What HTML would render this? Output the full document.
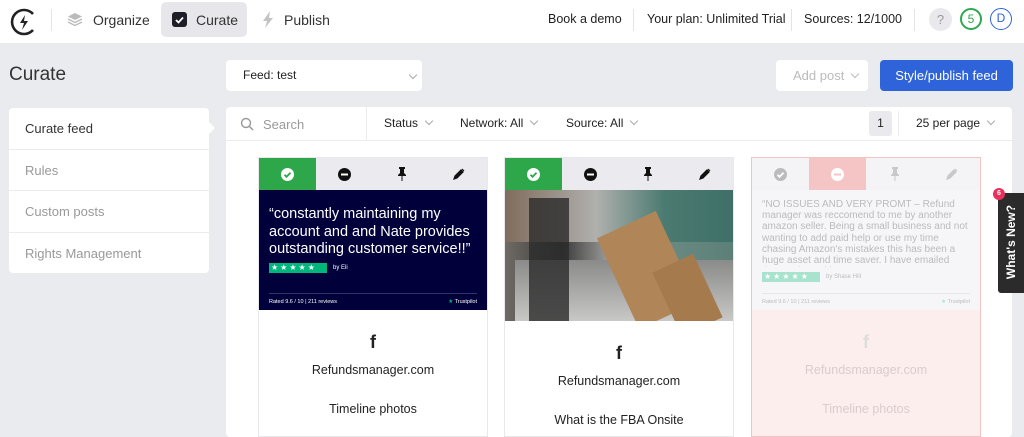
<!DOCTYPE html>
<html><head><meta charset="utf-8"><style>
*{box-sizing:border-box;margin:0;padding:0}
body{width:1024px;height:426px;overflow:hidden;background:#eaebef;font-family:"Liberation Sans",sans-serif;color:#222;position:relative;font-size:13px}
.abs{position:absolute}
.hdr{left:0;top:0;width:1024px;height:43px;background:#fff}
.sep{width:1px;background:#e4e4e8}
.chev{display:inline-block;width:6px;height:6px;border-right:1px solid #aaa;border-bottom:1px solid #aaa;transform:rotate(45deg);margin-left:8px;position:relative;top:-3px}
.side{left:9px;top:108px;width:200px;height:165px;background:#fff;border-radius:4px}
.side div{height:41.5px;border-bottom:1px solid #ececef;padding-left:16px;line-height:41px;color:#999;font-size:13px}
.card{background:#fff;border:1px solid #e8e8ec;width:230px;height:280px;top:157px}
.bar{height:32px;background:#ebebef;display:flex}
.bar span{flex:1;display:flex;align-items:center;justify-content:center}
.ctr{text-align:center;position:absolute;width:100%;font-size:13px}
</style></head><body>
<div class="abs hdr"></div>
<svg class="abs" style="left:9px;top:7px" width="30" height="30" viewBox="0 0 30 30"><path d="M24 7A12 12 0 1 0 24 23" fill="none" stroke="#222" stroke-width="2.6"/><path d="M16 8l-5 8h4l-2 7 6-9h-4z" fill="#222"/></svg>
<div class="abs sep" style="left:51px;top:9px;height:22px"></div>
<svg class="abs" style="left:67px;top:12px" width="16" height="14"><path d="M8 1l7 3.5-7 3.5-7-3.5z" fill="#bbb"/><path d="M1 7l7 3.5 7-3.5M1 10l7 3.5 7-3.5" fill="none" stroke="#bbb" stroke-width="1.4"/></svg>
<div class="abs" style="left:93px;top:12px;font-size:14px;color:#333">Organize</div>
<div class="abs" style="left:161px;top:2px;width:86px;height:35px;background:#e7e7eb;border-radius:5px"></div>
<div class="abs" style="left:172px;top:12px;width:15px;height:15px;background:#1e1e28;border-radius:3px"></div>
<svg class="abs" style="left:172px;top:12px" width="15" height="15"><path d="M4 8l2.5 2.5L11 5.5" fill="none" stroke="#fff" stroke-width="1.8"/></svg>
<div class="abs" style="left:196px;top:12px;font-size:14px;color:#333">Curate</div>
<svg class="abs" style="left:262px;top:11px" width="12" height="17"><path d="M8 0L1 10h4l-2 7 8-10H7z" fill="#c4c4c8"/></svg>
<div class="abs" style="left:284px;top:12px;font-size:14px;color:#333">Publish</div>
<div class="abs" style="left:548px;top:12px;font-size:12.5px">Book a demo</div>
<div class="abs sep" style="left:633px;top:9px;height:22px"></div>
<div class="abs" style="left:647px;top:12px;font-size:12.5px">Your plan: Unlimited Trial</div>
<div class="abs sep" style="left:791px;top:9px;height:22px"></div>
<div class="abs" style="left:804px;top:12px;font-size:12.5px">Sources: 12/1000</div>
<div class="abs sep" style="left:914px;top:9px;height:22px"></div>
<div class="abs" style="left:929px;top:8px;width:23px;height:23px;border-radius:50%;background:#e9e9ed;color:#999;text-align:center;line-height:23px;font-size:13px">?</div>
<div class="abs" style="left:960px;top:8px;width:22px;height:22px;border-radius:50%;border:2px solid #2fa84f;color:#2fa84f;text-align:center;line-height:18px;font-size:12px">5</div>
<div class="abs" style="left:990px;top:8px;width:22px;height:22px;border-radius:50%;border:1.5px solid #2d62d8;color:#2d62d8;text-align:center;line-height:19px;font-size:12px">D</div>

<div class="abs" style="left:9px;top:64px;font-size:19px;color:#333">Curate</div>
<div class="abs" style="left:226px;top:60px;width:196px;height:31px;background:#fff;border-radius:4px;padding-left:17px;line-height:31px;font-size:12px">Feed: test<span class="chev" style="position:absolute;left:176px;top:12px"></span></div>
<div class="abs" style="left:776px;top:60px;width:92px;height:31px;background:#fff;border-radius:4px;padding-left:17px;line-height:31px;font-size:13px;color:#bbb">Add post<span class="chev" style="border-color:#bbb"></span></div>
<div class="abs" style="left:880px;top:60px;width:133px;height:31px;background:#2e63d9;border-radius:4px;text-align:center;line-height:31px;font-size:13px;color:#fff">Style/publish feed</div>

<div class="abs side"><div style="color:#333">Curate feed</div><div>Rules</div><div>Custom posts</div><div style="border:none">Rights Management</div></div>
<div class="abs" style="left:208px;top:121px;width:0;height:0;border-top:7px solid transparent;border-bottom:7px solid transparent;border-left:7px solid #fff"></div>

<div class="abs" style="left:226px;top:107px;width:786px;height:330px;background:#fff;border-radius:4px"></div>
<div class="abs" style="left:226px;top:140px;width:786px;height:1px;background:#ececef"></div>
<svg class="abs" style="left:240px;top:117px" width="14" height="14"><circle cx="6" cy="6" r="4.5" fill="none" stroke="#999" stroke-width="1.4"/><path d="M9.5 9.5l3.5 3.5" stroke="#999" stroke-width="1.5"/></svg>
<div class="abs" style="left:263px;top:117px;color:#999">Search</div>
<div class="abs sep" style="left:366px;top:107px;height:33px;background:#ececef"></div>
<div class="abs" style="left:384px;top:116px;font-size:12px">Status<span class="chev"></span></div>
<div class="abs" style="left:460px;top:116px;font-size:12px">Network: All<span class="chev"></span></div>
<div class="abs" style="left:566px;top:116px;font-size:12px">Source: All<span class="chev"></span></div>
<div class="abs" style="left:869px;top:111px;width:23px;height:25px;background:#eaeaee;border-radius:3px;text-align:center;line-height:25px;font-size:12px">1</div>
<div class="abs sep" style="left:898px;top:111px;height:25px;background:#ececef"></div>
<div class="abs" style="left:916px;top:116px;font-size:12px">25 per page<span class="chev"></span></div>

<!-- card1 -->
<div class="abs card" style="left:258px">
<div class="bar"><span style="background:#2ea64a"><svg width="13" height="13"><circle cx="6.5" cy="6.5" r="6.5" fill="#fff"/><path d="M3.5 6.8l2 2 4-4" fill="none" stroke="#2ea64a" stroke-width="1.8"/></svg></span><span><svg width="13" height="13"><circle cx="6.5" cy="6.5" r="6.5" fill="#111"/><rect x="3" y="5.5" width="7" height="2" fill="#fff"/></svg></span><span><svg width="10" height="14"><path d="M2 0h6v2H7v4l2 2v1H1V8l2-2V2H2zM4.5 9h1v5h-1z" fill="#111"/></svg></span><span><svg width="12" height="12"><path d="M1 11l1-3 6-6 2 2-6 6zM9 1l2 2" fill="#111" stroke="#111" stroke-width="1.2"/></svg></span></div>
<div style="background:#01003a;height:120px;padding:16px 10px 0 10px;color:#fff;position:relative">
<div style="font-size:14.5px;line-height:17.5px">“constantly maintaining my account and and Nate provides outstanding customer service!!”</div>
<div style="margin-top:4px;display:flex;align-items:center">
<div style="width:58px;height:10px;background:#00b67a;color:#fff;font-size:8px;line-height:10px;letter-spacing:2px;padding-left:2px">★★★★★</div><span style="font-size:6px;margin-left:6px">by Eli</span></div>
<div style="position:absolute;left:10px;right:10px;top:103px;border-top:1px solid #333366;font-size:5.5px;padding-top:5px">Rated 9.6 / 10 | 211 reviews<span style="float:right"><span style="color:#00b67a">★</span> Trustpilot</span></div>
</div>
<div class="ctr" style="top:174px;font-size:18px;font-weight:bold">f</div>
<div class="ctr" style="top:205px;font-size:12.5px">Refundsmanager.com</div>
<div class="ctr" style="top:244px;font-size:12.5px">Timeline photos</div>
</div>

<!-- card2 -->
<div class="abs card" style="left:504px">
<div class="bar"><span style="background:#2ea64a"><svg width="13" height="13"><circle cx="6.5" cy="6.5" r="6.5" fill="#fff"/><path d="M3.5 6.8l2 2 4-4" fill="none" stroke="#2ea64a" stroke-width="1.8"/></svg></span><span><svg width="13" height="13"><circle cx="6.5" cy="6.5" r="6.5" fill="#111"/><rect x="3" y="5.5" width="7" height="2" fill="#fff"/></svg></span><span><svg width="10" height="14"><path d="M2 0h6v2H7v4l2 2v1H1V8l2-2V2H2zM4.5 9h1v5h-1z" fill="#111"/></svg></span><span><svg width="12" height="12"><path d="M1 11l1-3 6-6 2 2-6 6zM9 1l2 2" fill="#111" stroke="#111" stroke-width="1.2"/></svg></span></div>
<div style="height:131px;background:linear-gradient(90deg,#6f6a64 0%,#3a3a3a 25%,#9a9a98 45%,#6a8a84 70%,#5b8077 100%);position:relative;overflow:hidden">
<div style="position:absolute;left:0;top:0;width:100%;height:40%;background:linear-gradient(90deg,#806c5c,#b0b0ae 40%,#4a7a70 70%,#3f7068)"></div>
<div style="position:absolute;left:10px;top:70px;width:220px;height:61px;background:linear-gradient(#8a8a8a,#c8c8c6)"></div>
<div style="position:absolute;left:24px;top:8px;width:40px;height:123px;background:#2a2a2a;opacity:.8"></div>
<div style="position:absolute;left:110px;top:30px;width:65px;height:100px;background:#b08658;transform:rotate(-25deg)"></div>
<div style="position:absolute;left:160px;top:70px;width:45px;height:70px;background:#a57a4c;transform:rotate(-25deg)"></div>
</div>
<div class="ctr" style="top:185px;font-size:18px;font-weight:bold">f</div>
<div class="ctr" style="top:216px;font-size:12.5px">Refundsmanager.com</div>
<div class="ctr" style="top:255px;font-size:12.5px">What is the FBA Onsite</div>
</div>

<!-- card3 -->
<div class="abs card" style="left:751px;border-color:#f4c4c4;background:#fdeeee">
<div class="bar" style="background:#f4f4f6"><span><svg width="13" height="13"><circle cx="6.5" cy="6.5" r="6.5" fill="#bbb"/><path d="M3.5 6.8l2 2 4-4" fill="none" stroke="#fff" stroke-width="1.8"/></svg></span><span style="background:#f5c4c4"><svg width="13" height="13"><circle cx="6.5" cy="6.5" r="6.5" fill="#fff"/><rect x="3" y="5.5" width="7" height="2" fill="#f5c4c4"/></svg></span><span><svg width="10" height="14"><path d="M2 0h6v2H7v4l2 2v1H1V8l2-2V2H2zM4.5 9h1v5h-1z" fill="#c8c8c8"/></svg></span><span><svg width="12" height="12"><path d="M1 11l1-3 6-6 2 2-6 6zM9 1l2 2" fill="#c8c8c8" stroke="#c8c8c8" stroke-width="1.2"/></svg></span></div>
<div style="background:#f6f6f8;height:120px;padding:9px 10px 0 10px;color:#bbb;position:relative">
<div style="font-size:10px;line-height:11.2px;height:68px;overflow:hidden">“NO ISSUES AND VERY PROMT – Refund manager was reccomend to me by another amazon seller. Being a small business and not wanting to add paid help or use my time chasing Amazon's mistakes this has been a huge asset and time saver. I have emailed them 1 time with …</div>
<div style="margin-top:5px;display:flex;align-items:center"><div style="width:58px;height:10px;background:#a8e3cd;color:#fff;font-size:8px;line-height:10px;letter-spacing:2px;padding-left:2px">★★★★★</div><span style="font-size:6px;margin-left:6px">by Shase Hill</span></div>
<div style="position:absolute;left:10px;right:10px;top:103px;border-top:1px solid #e6e6ea;font-size:5.5px;padding-top:5px">Rated 9.6 / 10 | 211 reviews<span style="float:right"><span style="color:#a8e3cd">★</span> Trustpilot</span></div>
</div>
<div class="ctr" style="top:174px;font-size:18px;font-weight:bold;color:#ddd">f</div>
<div class="ctr" style="top:205px;font-size:12.5px;color:#d8cccc">Refundsmanager.com</div>
<div class="ctr" style="top:244px;font-size:12.5px;color:#d8cccc">Timeline photos</div>
</div>

<div class="abs" style="left:998px;top:193px;width:26px;height:100px;background:#2b2b2b;border-radius:3px 0 0 3px"></div>
<div class="abs" style="left:971px;top:235px;width:80px;text-align:center;color:#fff;font-size:12px;font-weight:bold;white-space:nowrap;transform:rotate(-90deg)">What's New?</div>
<div class="abs" style="left:993px;top:188px;width:12px;height:12px;border-radius:50%;background:#e8315a;color:#fff;font-size:7px;text-align:center;line-height:12px;font-weight:bold">6</div>
</body></html>
